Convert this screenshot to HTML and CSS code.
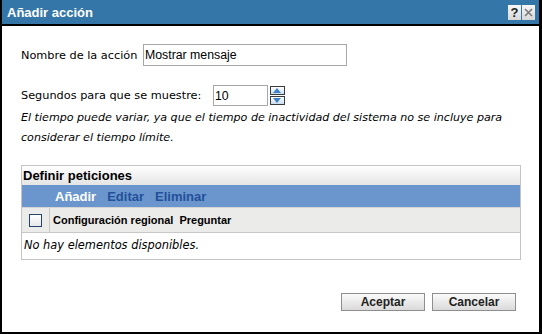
FILE: index.html
```html
<!DOCTYPE html>
<html lang="es">
<head>
    <meta charset="UTF-8">
    <title>Añadir acción</title>
    <link rel="stylesheet" href="styles.css">
</head>
<body>
    <div class="dialog">
        <!-- barra de título -->
        <div class="titlebar">
            <span class="title">Añadir acción</span>
            <div class="title_btns">
                <span class="tbtn help">?</span>
                <span class="tbtn close">
                    <svg width="9" height="9" viewBox="0 0 9 9"><path d="M1 1L8 8M8 1L1 8" stroke="#7a7a7a" stroke-width="1.6" fill="none"/></svg>
                </span>
            </div>
        </div>

        <div class="content">
            <div class="row name_row">
                <label>Nombre de la acción</label>
                <input class="field name" type="text" value="Mostrar mensaje">
            </div>
            <div class="row secs_row">
                <label>Segundos para que se muestre:</label>
                <input class="field secs" type="text" value="10">
                <div class="spinner">
                    <span class="spin up"></span>
                    <span class="spin down"></span>
                </div>
            </div>
            <p class="hint">El tiempo puede variar, ya que el tiempo de inactividad del sistema no se incluye para<br>considerar el tiempo límite.</p>

            <!-- tabla de peticiones -->
            <div class="prompts">
                <div class="prompts_head">Definir peticiones</div>
                <div class="toolbar">
                    <a href="#" class="current">Añadir</a>
                    <a href="#">Editar</a>
                    <a href="#">Eliminar</a>
                </div>
                <div class="cols">
                    <div class="check_cell"><span class="checkbox"></span></div>
                    <div class="col">Configuración regional</div>
                    <div class="col">Preguntar</div>
                </div>
                <div class="empty">No hay elementos disponibles.</div>
            </div>

            <div class="actions">
                <button>Aceptar</button>
                <button>Cancelar</button>
            </div>
        </div>
    </div>
</body>
</html>
```

FILE: styles.css
```css
*{
    margin: 0;
    padding: 0;
    box-sizing: border-box;
}
body{
    width: 542px;
    height: 334px;
    background: #fff;
    font-family: "DejaVu Sans", sans-serif;
    font-size: 11.3px;
    color: #000;
}
.dialog{
    height: 334px;
    border-left: 2px solid #000;
    border-right: 3px solid #000;
    border-bottom: 2px solid #000;
}
.titlebar{
    height: 26px;
    background: #3576a8;
    border-bottom: 2px solid #000;
    display: flex;
    align-items: center;
    justify-content: space-between;
    padding: 0 4px 0 5px;
}
.titlebar .title{
    font-family: "Liberation Sans", sans-serif;
    font-weight: bold;
    font-size: 13px;
    color: #fff;
}
.title_btns{
    display: flex;
    gap: 1px;
    margin-top: 1px;
}
.tbtn{
    width: 13px;
    height: 15px;
    background: linear-gradient(#f6f6f6, #d8d8d8);
    display: flex;
    align-items: center;
    justify-content: center;
}
.tbtn.help{
    font-family: "Liberation Sans", sans-serif;
    font-weight: bold;
    font-size: 13px;
    color: #222;
}
.content{
    padding: 0 18px 0 19px;
}
.row{
    display: flex;
    align-items: center;
}
.row label{
    flex: none;
}
.field{
    border: 1px solid #a6a6a6;
    font-family: "Liberation Sans", sans-serif;
    font-size: 12.3px;
    color: #000;
    padding: 0 1px;
    outline: none;
}
.name_row{
    margin-top: 18px;
}
.name_row label{
    width: 122px;
}
.field.name{
    width: 204px;
    height: 22px;
}
.secs_row{
    margin-top: 19px;
}
.secs_row label{
    width: 192px;
}
.field.secs{
    width: 55px;
    height: 21px;
}
.spinner{
    margin-left: 2px;
    display: flex;
    flex-direction: column;
    gap: 1px;
}
.spin{
    width: 15px;
    height: 9px;
    border: 1px solid #3a3a3a;
    background: linear-gradient(#ffffff, #c9dcf0);
    position: relative;
}
.spin::after{
    content: "";
    position: absolute;
    left: 2px;
    border-left: 4.5px solid transparent;
    border-right: 4.5px solid transparent;
}
.spin.up::after{
    top: 1px;
    border-bottom: 5px solid #3f82c9;
}
.spin.down::after{
    top: 1px;
    border-top: 5px solid #3f82c9;
}
.hint{
    margin-top: 2px;
    font-style: italic;
    font-size: 11.1px;
    line-height: 20px;
}
.prompts{
    margin-top: 17px;
    width: 500px;
    border: 1px solid #c4c4c4;
}
.prompts_head{
    height: 19px;
    line-height: 19px;
    padding-left: 1px;
    background: linear-gradient(#ffffff, #e4e4e4);
    font-family: "Liberation Sans", sans-serif;
    font-weight: bold;
    font-size: 13px;
}
.toolbar{
    height: 22px;
    background: #6a96cd;
    display: flex;
    align-items: center;
    gap: 11px;
    padding-left: 33px;
}
.toolbar a{
    font-family: "Liberation Sans", sans-serif;
    font-weight: bold;
    font-size: 13px;
    color: #24509a;
    text-decoration: none;
}
.toolbar a.current{
    color: #fff;
}
.cols{
    height: 26px;
    background: #ebebe9;
    border-top: 1px solid #d4d4d4;
    border-bottom: 1px solid #c8c8c8;
    display: flex;
    align-items: center;
    font-family: "Liberation Sans", sans-serif;
    font-weight: bold;
    font-size: 11px;
}
.check_cell{
    width: 28px;
    height: 100%;
    border-right: 1px solid #c8c8c8;
    display: flex;
    align-items: center;
    justify-content: center;
}
.checkbox{
    width: 13px;
    height: 13px;
    border: 1px solid #24446e;
    background: linear-gradient(#ffffff, #e8e8e8);
}
.col{
    padding-left: 3px;
    margin-right: 3px;
}
.empty{
    height: 26px;
    line-height: 24px;
    padding-left: 2px;
    font-style: italic;
    font-size: 11.4px;
}
.actions{
    margin-top: 33px;
    display: flex;
    justify-content: flex-end;
    gap: 7px;
    padding-right: 5px;
}
.actions button{
    width: 84px;
    height: 18px;
    border: 1px solid #8e8e8e;
    background: linear-gradient(#fbfbfb, #dadada);
    font-family: "Liberation Sans", sans-serif;
    font-weight: bold;
    font-size: 12px;
    color: #222;
}
```
